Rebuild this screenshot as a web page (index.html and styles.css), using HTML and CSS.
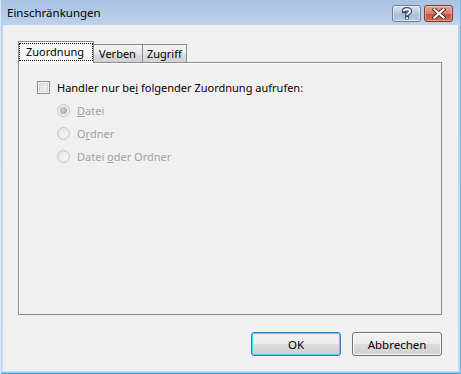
FILE: index.html
```html
<!DOCTYPE html>
<html>
<head>
<meta charset="utf-8">
<link rel="stylesheet" href="styles.css">
</head>
<body>
<div class="window">
  <div class="titlebar">
    <span class="title">Einschränkungen</span>
    <div class="caption-buttons">
      <div class="cap-btn help">
        <svg width="12" height="13" viewBox="0 0 12 13"><path d="M3 4.2 C3 1.6 9 1.4 9 4.2 C9 6.2 6 6.3 6 8.3" fill="none" stroke="#3a4a60" stroke-width="4.2" stroke-linecap="square"/><rect x="4.2" y="9.6" width="3.6" height="3" fill="#3a4a60"/><path d="M3 4.2 C3 1.6 9 1.4 9 4.2 C9 6.2 6 6.3 6 8.3" fill="none" stroke="#fff" stroke-width="2"/><rect x="5" y="10.3" width="2" height="1.8" fill="#fff"/></svg>
      </div>
      <div class="cap-btn close">
        <svg width="14" height="11" viewBox="0 0 14 11"><path d="M2.5 1.5 L11.5 9.5 M11.5 1.5 L2.5 9.5" stroke="#5a2318" stroke-width="4" stroke-linecap="square"/><path d="M2.5 1.5 L11.5 9.5 M11.5 1.5 L2.5 9.5" stroke="#fff" stroke-width="2.2" stroke-linecap="square"/></svg>
      </div>
    </div>
  </div>
  <div class="client">
    <div class="tabs">
      <div class="tab selected"><span class="focus">Zuordnung</span></div>
      <div class="tab">Verben</div>
      <div class="tab">Zugriff</div>
    </div>
    <div class="panel">
      <div class="row check-row">
        <span class="checkbox"></span>
        <span>Handler nur be<u>i</u> folgender Zuordnung aufrufen:</span>
      </div>
      <div class="radios">
        <div class="row radio-row"><span class="radio checked"></span><span><u>D</u>atei</span></div>
        <div class="row radio-row"><span class="radio"></span><span>O<u>r</u>dner</span></div>
        <div class="row radio-row"><span class="radio"></span><span>Datei <u>o</u>der Ordner</span></div>
      </div>
    </div>
    <div class="footer">
      <div class="btn default">OK</div>
      <div class="btn">Abbrechen</div>
    </div>
  </div>
</div>
</body>
</html>
```
FILE: styles.css
```css
html, body {
  margin: 0;
  padding: 0;
  background: #ffffff;
}
body {
  font-family: "Noto Sans", "DejaVu Sans", sans-serif;
  font-size: 11px;
  color: #000;
}
.window {
  width: 461px;
  height: 374px;
  box-sizing: border-box;
  background: linear-gradient(#a9c2e2, #bcd1ec 25px, #c4d8ef);
  display: flex;
  flex-direction: column;
  padding: 0 3px 3px 3px;
  box-shadow: inset 1px 0 0 #dbe8f6, inset -1px 0 0 #6fb8e2, inset 0 -1px 0 #2aa7d8, inset 0 -2px 0 #8fd0ee;
}
.titlebar {
  height: 25px;
  display: flex;
  align-items: flex-start;
  justify-content: space-between;
}
.title {
  padding-left: 4px;
  padding-top: 5px;
  font-size: 11.5px;
  line-height: 16px;
  color: #000;
}
.caption-buttons {
  display: flex;
  gap: 3px;
  padding-top: 5px;
  padding-right: 5px;
}
.cap-btn {
  height: 17px;
  box-sizing: border-box;
  border: 1px solid #6d7d95;
  border-radius: 3px;
  display: flex;
  align-items: center;
  justify-content: center;
}
.cap-btn.help {
  width: 29px;
  background: linear-gradient(#d8e3f1, #b6c7de 50%, #a8bbd5 51%, #b9cbe3);
  box-shadow: inset 0 0 0 1px rgba(255,255,255,0.5);
}
.cap-btn.close {
  width: 29px;
  border-color: #7a3a2e;
  background: linear-gradient(#e7a796, #d3806c 50%, #c2533e 51%, #cf6a52);
  box-shadow: inset 0 0 0 1px rgba(255,255,255,0.35);
}
.client {
  flex: 1;
  background: #f0f0f0;
  display: flex;
  flex-direction: column;
  padding: 16px 16px 15px 15px;
}
.tabs {
  display: flex;
  align-items: flex-end;
  height: 21px;
  position: relative;
  z-index: 1;
}
.tab {
  height: 18px;
  box-sizing: border-box;
  border: 1px solid #898c95;
  border-bottom: none;
  border-left: none;
  background: linear-gradient(#f3f3f3, #ebebeb 50%, #dddddd 51%, #d1d1d1);
  padding: 0 6px 0 5px;
  line-height: 17px;
  color: #000;
}
.tab + .tab + .tab {
  padding: 0 4px 0 4px;
}
.tab.selected {
  height: 22px;
  margin-bottom: -1px;
  border-left: 1px solid #898c95;
  border-right: 1px solid #898c95;
  background: #fbfbfb;
  padding: 2px 1px 0 1px;
  line-height: 16px;
}
.focus {
  display: block;
  outline: 1px dotted #000;
  outline-offset: 0;
  padding: 0 8px 0 6px;
}
.panel {
  height: 253px;
  box-sizing: border-box;
  border: 1px solid #898c95;
  box-shadow: inset 1px 1px 0 #fff;
  background: #f0f0f0;
  padding: 16px 18px;
}
.row {
  display: flex;
  align-items: center;
  gap: 7px;
  height: 17px;
  line-height: 17px;
}
.check-row {
  color: #000;
}
.checkbox {
  width: 13px;
  height: 13px;
  box-sizing: border-box;
  border: 1px solid #8f8f8f;
  background: linear-gradient(135deg, #dcdcdc, #f7f7f7);
  box-shadow: inset 0 0 0 1px #f4f4f4, inset 0 0 0 2px #d7d7d7;
}
.radios {
  padding-left: 20px;
  padding-top: 6px;
  display: flex;
  flex-direction: column;
  gap: 6px;
  color: #a0a0a0;
}
.radio {
  width: 13px;
  height: 13px;
  box-sizing: border-box;
  border-radius: 50%;
  border: 1px solid #c6c6c6;
  background: radial-gradient(circle at 60% 60%, #f4f4f4, #e2e2e2);
  position: relative;
}
.radio.checked::after {
  content: "";
  position: absolute;
  left: 2px;
  top: 2px;
  width: 7px;
  height: 7px;
  border-radius: 50%;
  background: radial-gradient(circle at 40% 40%, #d0d0d0, #9a9a9a);
}
.footer {
  margin-top: auto;
  display: flex;
  justify-content: flex-end;
  gap: 11px;
}
.btn {
  width: 90px;
  height: 24px;
  box-sizing: border-box;
  border: 1px solid #707070;
  border-radius: 3px;
  background: linear-gradient(#f2f2f2, #ebebeb 50%, #dddddd 51%, #cfcfcf);
  box-shadow: inset 0 0 0 1px #fbfbfb;
  display: flex;
  align-items: center;
  justify-content: center;
  color: #000;
  font-size: 11.5px;
}
.btn.default {
  border-color: #3c7fb1;
  box-shadow: inset 0 0 0 1px #48d1f8;
}
```
